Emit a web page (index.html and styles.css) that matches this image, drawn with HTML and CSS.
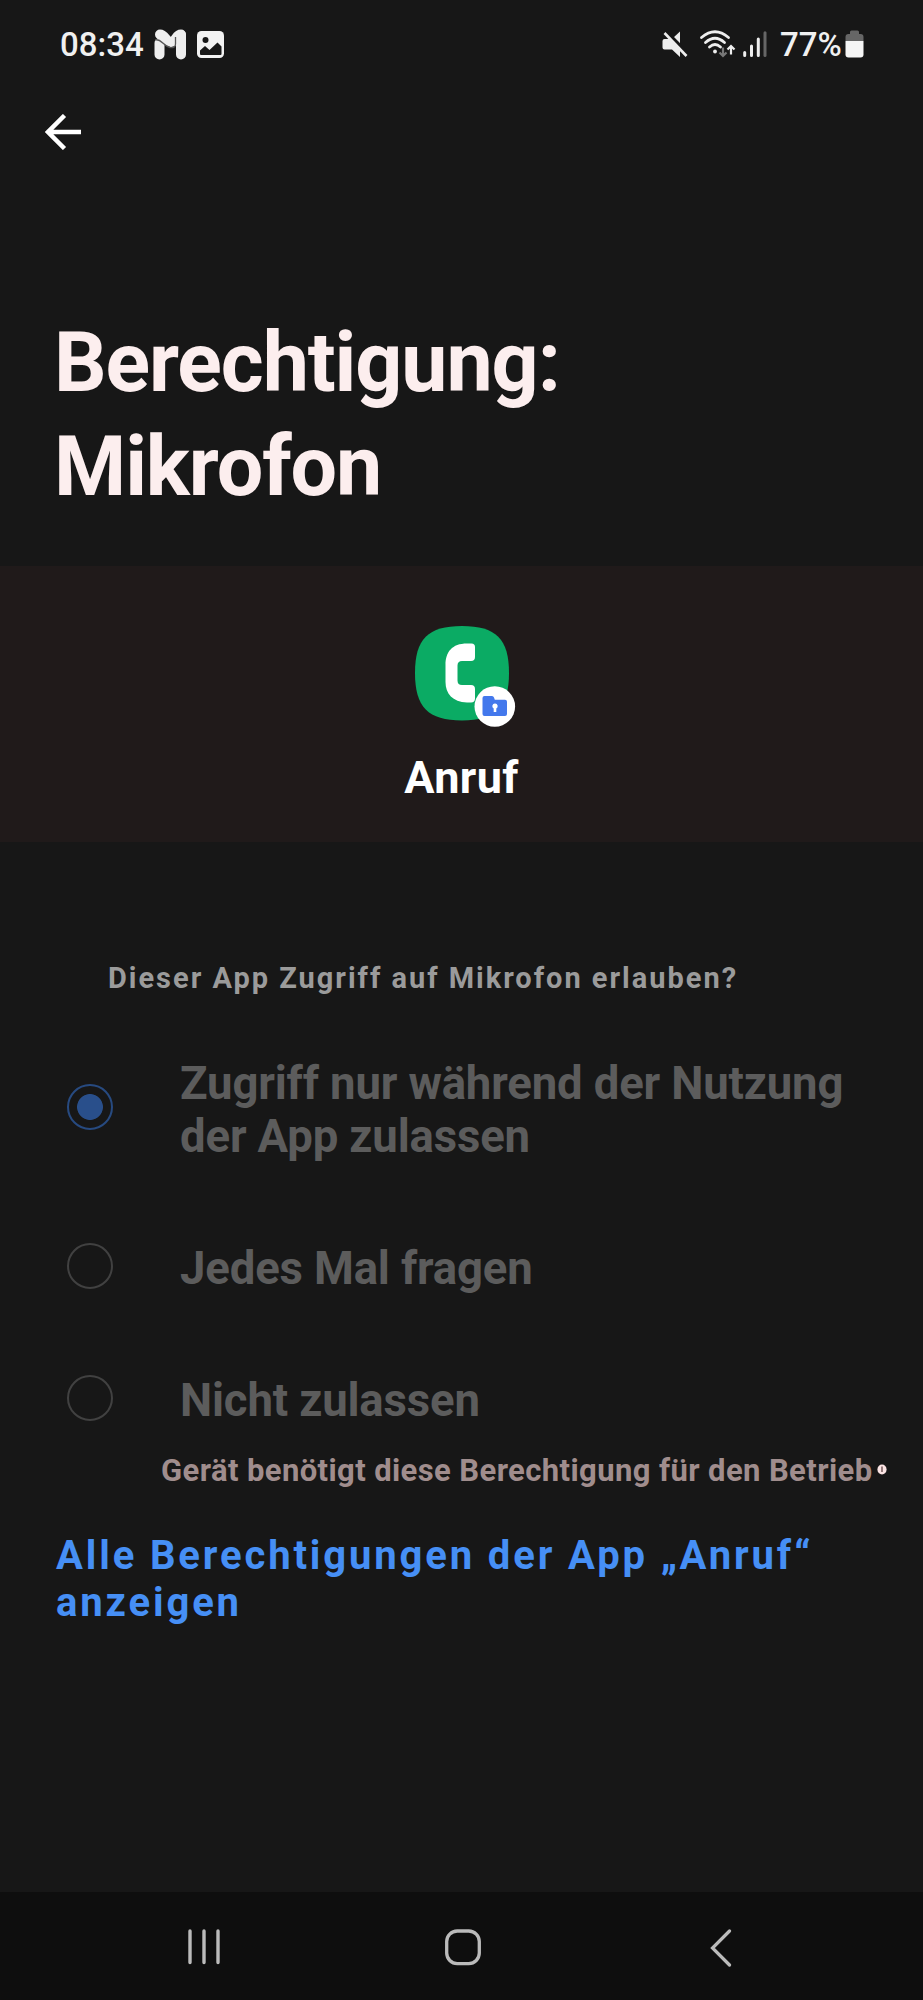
FILE: index.html
```html
<!DOCTYPE html>
<html lang="de">
<head>
<meta charset="utf-8">
<title>Berechtigung: Mikrofon</title>
<link rel="stylesheet" href="styles.css">
</head>
<body>
<div class="screen">
  <header class="status">
    <div class="status-left">
      <span class="time">08:34</span>
      <svg class="icon-m" width="33" height="31" viewBox="0 0 33 31">
        <path d="M5.500 14v11.500M27 6v19.500" stroke="#eee" stroke-width="10" stroke-linecap="round" fill="none"/>
        <path d="M6 5.500C11 5.500 12 13 17 13S22 5.500 27 5.500" stroke="#eee" stroke-width="10" stroke-linecap="round" fill="none"/>
        <path d="M1 11C7 9 9 17 16 18.500C20 19 21.500 17.500 21.500 15V8" stroke="#555" stroke-width="1.300" fill="none"/>
      </svg>
      <svg class="icon-pic" width="27" height="27" viewBox="0 0 27 27">
        <rect width="27" height="27" rx="4.500" fill="#f2f2f2"/>
        <circle cx="8.500" cy="9" r="3" fill="#171717"/>
        <path d="M3 23v-3.500l5-4.500 4.500 4 8-7.500 4 4V23a1 1 0 0 1-1 1H4a1 1 0 0 1-1-1z" fill="#171717"/>
      </svg>
    </div>
    <div class="status-right">
      <svg class="icon-mute" width="26" height="27" viewBox="0 0 26 27">
        <path d="M11 7l7-6.500v14z" fill="#eee"/>
        <path d="M2.500 8H7l11 10.500V26l-8-7.500H2.500Q.5 18.500.5 16.500V10Q.5 8 2.500 8z" fill="#eee"/>
        <path d="M4.500.5L26 22.500" stroke="#171717" stroke-width="3"/>
        <path d="M2.500 2L24.500 25" stroke="#eee" stroke-width="2.600"/>
      </svg>
      <svg class="icon-wifi" width="36" height="29" viewBox="0 0 36 29">
        <path d="M1.500 7.500Q15 -4 28.500 7.500M5.500 12.500Q15 4 24.500 12.500M9.500 17Q15 12 20.500 17" fill="none" stroke="#eee" stroke-width="2.700" stroke-linecap="round"/>
        <circle cx="15" cy="21.500" r="1.900" fill="#eee"/>
        <path d="M23 17.500v8.500M19.500 22.500l3.500 3.500 3.500-3.500" fill="none" stroke="#777" stroke-width="2.200"/>
        <path d="M31 24.500V16M27.500 19.500l3.500-3.500 3.500 3.500" fill="none" stroke="#eee" stroke-width="2.200"/>
      </svg>
      <svg class="icon-signal" width="24" height="26" viewBox="0 0 24 26">
        <path d="M1.700 21.500v3M8.500 15v9.500M15.300 8v16.500" stroke="#eee" stroke-width="3" stroke-linecap="round"/>
        <path d="M22 1.800v22.700" stroke="#666" stroke-width="3" stroke-linecap="round"/>
      </svg>
      <span class="percent">77%</span>
      <svg class="icon-battery" width="19" height="28" viewBox="0 0 19 28">
        <path d="M5 4V2Q5 .5 6.500 .5h6Q14 .5 14 2v2h1.500Q18.500 4 18.500 7v4H.5V7Q.5 4 3.500 4z" fill="#666"/>
        <path d="M.5 11h18v13.500q0 3-3 3h-12q-3 0-3-3z" fill="#f5f5f5"/>
      </svg>
    </div>
  </header>

  <button class="back" aria-label="Zurück">
    <svg width="37" height="36" viewBox="0 0 37 36">
      <path d="M19.500 1.500L3 18l16.500 16.500M3 18h33" fill="none" stroke="#fff" stroke-width="4.500"/>
    </svg>
  </button>

  <h1 class="title">Berechtigung:<br>Mikrofon</h1>

  <section class="app">
    <svg width="106" height="104" viewBox="0 0 106 104">
      <path d="M47 0C81 0 94 13 94 47S81 94.500 47 94.500 0 81 0 47 13 0 47 0z" fill="#0bab64"/>
      <path d="M52 17.500h4.500q3.500 0 3.500 3.500v10q0 4-4 4H47q-4.500 0-4.500 4.500v15q0 4.500 4.500 4.500h9q4 0 4 4v9.500q0 4-4 4h-4C37.500 76 30.500 67.500 30.500 56V39C30.500 26 37 17.500 52 17.500z" fill="#fff"/>
      <circle cx="79.800" cy="80.500" r="20.300" fill="#fff"/>
      <path d="M69.500 70h7.500q1.500 0 2 1.500l.8 2.300H90q2 0 2 2V88q0 2-2 2H69.500q-2 0-2-2V72q0-2 2-2z" fill="#4378ec"/>
      <path d="M80 77.500a2.600 2.600 0 0 1 1.300 4.900V86h-2.600v-3.600A2.600 2.600 0 0 1 80 77.500z" fill="#fff"/>
    </svg>
    <div class="app-name">Anruf</div>
  </section>

  <main>
    <p class="question">Dieser App Zugriff auf Mikrofon erlauben?</p>
    <div class="options">
      <div class="option first"><span class="radio checked"></span><span>Zugriff nur während der Nutzung<br>der App zulassen</span></div>
      <div class="option"><span class="radio"></span><span>Jedes Mal fragen</span></div>
      <div class="option"><span class="radio"></span><span>Nicht zulassen</span></div>
    </div>
    <p class="note"><span>Gerät benötigt diese Berechtigung für den Betrieb</span>
      <svg width="10" height="11" viewBox="0 0 10 11"><ellipse cx="5" cy="5.500" rx="4.600" ry="5" fill="#fbe4e4"/><path d="M5 2.500v5.500" stroke="#5c4343" stroke-width="1.300"/></svg>
    </p>
    <a class="all">Alle Berechtigungen der App „Anruf“<br>anzeigen</a>
  </main>

  <nav class="nav">
    <svg width="32" height="36" viewBox="0 0 32 36"><path d="M2 2v31.500M16 2v31.500M30 2v31.500" stroke="#bbb" stroke-width="3.400" stroke-linecap="round"/></svg>
    <svg class="home" width="36" height="37" viewBox="0 0 36 37"><rect x="1.700" y="2" width="32.600" height="32.600" rx="10.500" fill="none" stroke="#bbb" stroke-width="3.300"/></svg>
    <svg class="nav-back" width="22" height="38" viewBox="0 0 22 38"><path d="M19.500 2L2.500 19l17 17" fill="none" stroke="#bbb" stroke-width="3.200" stroke-linecap="round"/></svg>
  </nav>
</div>
</body>
</html>
```
FILE: styles.css
```css
* { box-sizing: border-box; }
body { margin: 0; background: #171717; font-family: Roboto, sans-serif; }
p, h1 { margin: 0; }
svg { display: block; flex: none; }

.screen {
  width: 923px;
  height: 2000px;
  display: flex;
  flex-direction: column;
  background: #171717;
  overflow: hidden;
  white-space: nowrap;
}

.status {
  height: 114px;
  padding: 24px 59px 0 60px;
  display: flex;
  justify-content: space-between;
  align-items: flex-start;
  color: #f0f0f0;
  font-size: 33px;
  font-weight: 500;
  line-height: 41px;
}
.status-left, .status-right { display: flex; align-items: flex-start; }
.time { width: 94px; }
.icon-m { margin-top: 5px; }
.icon-pic { margin: 7px 0 0 10px; }
.icon-mute { margin-top: 7px; }
.icon-wifi { margin: 6px 0 0 12px; }
.icon-signal { margin: 7px 0 0 7px; }
.percent { margin-left: 13px; width: 60px; }
.icon-battery { margin: 6px 0 0 5px; }

.back {
  margin: 0 0 0 45px;
  padding: 0;
  border: 0;
  background: none;
  width: 37px;
  height: 36px;
}

.title {
  margin: 161px 0 47px 54px;
  font-size: 82.5px;
  line-height: 104px;
  font-weight: 700;
  letter-spacing: -1.1px;
  color: #fceeee;
}

.app {
  height: 276px;
  padding-top: 60px;
  background: #201a1a;
}
.app svg { margin-left: 415px; }
.app-name {
  margin-top: 21px;
  font-size: 45px;
  line-height: 54px;
  font-weight: 700;
  letter-spacing: 0.4px;
  text-align: center;
  color: #fff;
}

.question {
  margin: 116px 0 0 108px;
  font-size: 29px;
  line-height: 40px;
  font-weight: 700;
  letter-spacing: 1.98px;
  color: #9b9b9b;
}

.options { display: flex; flex-direction: column; gap: 79px; padding: 59px 0 0 67px; }
.option {
  display: flex;
  align-items: flex-start;
  gap: 67px;
  font-size: 45.5px;
  line-height: 53px;
  font-weight: 700;
  letter-spacing: -0.15px;
  color: #5c5c5c;
}
.radio {
  flex: none;
  width: 46px;
  height: 46px;
  border: 2px solid #414141;
  border-radius: 50%;
}
.first .radio { margin-top: 27px; }
.option + .option .radio { margin-top: 1px; }
.checked {
  border-color: #274a80;
  background: radial-gradient(circle, #294f8b 12.5px, transparent 13.300px);
}

.note {
  display: flex;
  margin: 24px 0 0 161px;
  font-size: 31px;
  line-height: 40px;
  font-weight: 700;
  letter-spacing: 0.4px;
  color: #a08d8d;
}
.note svg { margin: 13px 0 0 5px; }

.all {
  display: block;
  margin: 41px 0 0 56px;
  font-size: 40px;
  line-height: 47px;
  font-weight: 700;
  letter-spacing: 2.87px;
  color: #468ff5;
}

.nav {
  margin-top: auto;
  height: 108px;
  padding: 37px 191px 0 188px;
  display: flex;
  justify-content: space-between;
  background: #0e0e0e;
}
.home { margin-left: -5px; }
```
